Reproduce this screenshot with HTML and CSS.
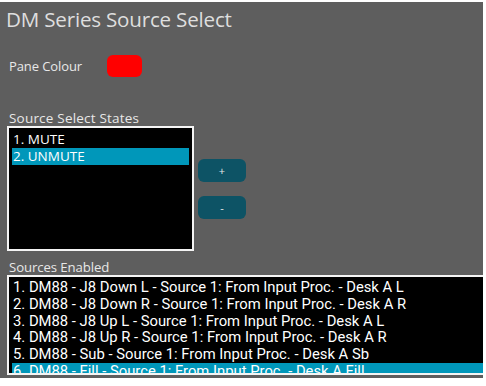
FILE: index.html
```html
<!DOCTYPE html>
<html>
<head>
<meta charset="utf-8">
<link rel="stylesheet" href="styles.css">
</head>
<body>
<div class="panel">
  <h1 class="title">DM Series Source Select</h1>
  <div class="pane-row">
    <span class="label">Pane Colour</span>
    <span class="swatch"></span>
  </div>
  <div class="label section-label">Source Select States</div>
  <div class="states-row">
    <div class="listbox states">
      <div class="item">1. MUTE</div>
      <div class="item selected">2. UNMUTE</div>
    </div>
    <div class="buttons">
      <button class="btn">+</button>
      <button class="btn">-</button>
    </div>
  </div>
  <div class="label section-label2">Sources Enabled</div>
  <div class="listbox sources">
    <div class="item">1. DM88 - J8 Down L - Source 1: From Input Proc. - Desk A L</div>
    <div class="item">2. DM88 - J8 Down R - Source 1: From Input Proc. - Desk A R</div>
    <div class="item">3. DM88 - J8 Up L - Source 1: From Input Proc. - Desk A L</div>
    <div class="item">4. DM88 - J8 Up R - Source 1: From Input Proc. - Desk A R</div>
    <div class="item">5. DM88 - Sub - Source 1: From Input Proc. - Desk A Sb</div>
    <div class="item selected">6. DM88 - Fill - Source 1: From Input Proc. - Desk A Fill</div>
  </div>
</div>
</body>
</html>
```

FILE: styles.css
```css
html, body {
  margin: 0;
  padding: 0;
  background: #ffffff;
}
body {
  font-family: "Open Sans", "Noto Sans", sans-serif;
}
.panel {
  margin-top: 2px;
  width: 483px;
  height: 376px;
  background: #5e5e5e;
  overflow: hidden;
  display: flex;
  flex-direction: column;
}
.title {
  margin: 0;
  padding: 4px 0 0 6px;
  font-size: 20.6px;
  line-height: 27px;
  font-weight: 400;
  color: #dedede;
  letter-spacing: -0.2px;
}
.label {
  font-size: 13px;
  color: #e8e8e8;
  letter-spacing: -0.1px;
}
.pane-row {
  display: flex;
  align-items: center;
  margin-top: 22px;
  padding-left: 9px;
  height: 22px;
}
.swatch {
  margin-left: 25px;
  width: 35px;
  height: 22px;
  border-radius: 6px;
  background: #ff0000;
}
.section-label {
  margin-top: 34px;
  padding-left: 9px;
  line-height: 15px;
  font-size: 13.5px;
  letter-spacing: 0.2px;
}
.states-row {
  display: flex;
  align-items: flex-start;
  margin-left: 7px;
}
.listbox {
  background: #000;
  border: 2px solid #f4f4f4;
  box-sizing: border-box;
  color: #ffffff;
  overflow: hidden;
}
.states {
  width: 187px;
  height: 125px;
  padding: 3px 3px 2px;
  font-size: 13.5px;
  line-height: 17px;
}
.item {
  white-space: nowrap;
  padding-left: 1px;
}
.selected {
  background: #0097ba;
}
.buttons {
  display: flex;
  flex-direction: column;
  gap: 14px;
  margin-left: 4px;
  margin-top: 33px;
}
.btn {
  width: 48px;
  height: 23px;
  border: none;
  border-radius: 6px;
  background: #0d5365;
  color: #e8e8e8;
  font-family: "Open Sans", sans-serif;
  font-size: 11px;
  padding: 0;
}
.section-label2 {
  margin-top: 9px;
  padding-left: 9px;
  line-height: 15px;
  font-size: 13.2px;
}
.sources {
  margin-left: 7px;
  width: 486px;
  height: 100px;
  padding: 2px 3px 0;
  font-family: Roboto, "Open Sans", sans-serif;
  font-size: 14.8px;
  line-height: 16.8px;
  border-right: none;
}
```
